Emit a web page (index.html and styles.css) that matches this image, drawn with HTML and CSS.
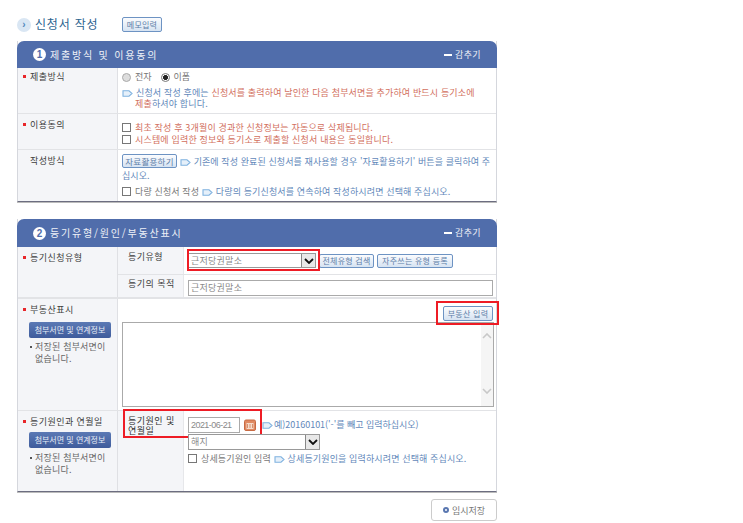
FILE: index.html
```html
<!DOCTYPE html>
<html lang="ko">
<head>
<meta charset="utf-8">
<title>신청서 작성</title>
<link rel="stylesheet" href="styles.css">
</head>
<body>
<svg class="sprite" width="0" height="0" aria-hidden="true">
  <symbol id="tag" viewBox="0 0 11 7"><path d="M1 .8h6l3 2.7-3 2.7H1z" fill="#e6f0fa" stroke="#7fb2e0" stroke-width="1.1"/></symbol>
</svg>
<main class="page">
  <header class="title-bar">
    <span class="title-icon">›</span>
    <h1>신청서 작성</h1>
    <button class="btn memo">메모입력</button>
  </header>

  <section class="panel">
    <div class="panel-head">
      <span class="num">1</span><h2>제출방식 및 이용동의</h2>
      <span class="fold"><i></i>감추기</span>
    </div>
    <div class="row r1">
      <div class="th req">제출방식</div>
      <div class="td">
        <div class="radios">
          <span class="radio off"></span><span class="gray">전자</span>
          <span class="radio on"></span><span class="gray">이폼</span>
        </div>
        <p class="note hang"><svg class="tag"><use href="#tag"/></svg>신청서 작성 후에는 <em>신청서를 출력하여 날인한 다음 첨부서면을 추가하여 반드시 등기소에 제출</em>하셔야 합니다.</p>
      </div>
    </div>
    <div class="row r2">
      <div class="th req">이용동의</div>
      <div class="td agree">
        <label class="red"><span class="check"></span>최초 작성 후 3개월이 경과한 신청정보는 자동으로 삭제됩니다.</label>
        <label class="red"><span class="check"></span>시스템에 입력한 정보와 등기소로 제출할 신청서 내용은 동일합니다.</label>
      </div>
    </div>
    <div class="row r3">
      <div class="th">작성방식</div>
      <div class="td">
        <p class="note use"><button class="btn reuse">자료활용하기</button> <svg class="tag"><use href="#tag"/></svg>기존에 작성 완료된 신청서를 재사용할 경우 '자료활용하기' 버튼을 클릭하여 주십시오.</p>
        <label class="note multi"><span class="check"></span><span class="gray">다량 신청서 작성</span> <svg class="tag"><use href="#tag"/></svg>다량의 등기신청서를 연속하여 작성하시려면 선택해 주십시오.</label>
      </div>
    </div>
  </section>

  <section class="panel second">
    <div class="panel-head">
      <span class="num">2</span><h2>등기유형/원인/부동산표시</h2>
      <span class="fold"><i></i>감추기</span>
    </div>
    <div class="row r5">
      <div class="th req">등기신청유형</div>
      <div class="stack">
        <div class="sub s1">
          <div class="th2">등기유형</div>
          <div class="td2">
            <span class="select wide"><span>근저당권말소</span><b><svg viewBox="0 0 10 6" width="10" height="6"><path d="M1 1l4 4 4-4" fill="none" stroke="#111" stroke-width="1.8"/></svg></b></span>
            <button class="btn b1">전체유형 검색</button>
            <button class="btn b2">자주쓰는 유형 등록</button>
            <span class="mark m1"></span>
          </div>
        </div>
        <div class="sub s2">
          <div class="th2">등기의 목적</div>
          <div class="td2"><span class="input full">근저당권말소</span></div>
        </div>
      </div>
    </div>
    <div class="row r6">
      <div class="th req">부동산표시
        <button class="attach">첨부서면 및 연계정보</button>
        <p class="saved">저장된 첨부서면이 없습니다.</p>
      </div>
      <div class="td prop">
        <div class="prop-top"><button class="btn b3">부동산 입력</button><span class="mark m2"></span></div>
        <div class="area">
          <div class="scroll">
            <svg viewBox="0 0 10 6" width="10" height="6"><path d="M1 5l4-4 4 4" fill="none" stroke="#c8c8c8" stroke-width="1.6"/></svg>
            <svg viewBox="0 0 10 6" width="10" height="6"><path d="M1 1l4 4 4-4" fill="none" stroke="#c8c8c8" stroke-width="1.6"/></svg>
          </div>
        </div>
      </div>
    </div>
    <div class="row r7">
      <div class="th req">등기원인과 연월일
        <button class="attach">첨부서면 및 연계정보</button>
        <p class="saved">저장된 첨부서면이 없습니다.</p>
      </div>
      <div class="th2 cause">등기원인 및<br>연월일<span class="mark m3"></span></div>
      <div class="td2 col">
        <div class="date-line">
          <span class="input date">2021-06-21</span>
          <svg class="cal" viewBox="0 0 12 12" width="12" height="12"><rect x=".5" y="1" width="11" height="10.5" rx="1.5" fill="#e08a62" stroke="#c86a42"/><rect x="2.5" y="4" width="7" height="6" fill="#f6dccb"/><path d="M3.5 5v4M6 5v4M8.5 5v4" stroke="#cf7d58" stroke-width=".8"/></svg>
          <svg class="tag t2"><use href="#tag"/></svg>
          <span class="note example">예)20160101('-'를 빼고 입력하십시오)</span>
        </div>
        <span class="select reason"><span>해지</span><b><svg viewBox="0 0 10 6" width="10" height="6"><path d="M1 1l4 4 4-4" fill="none" stroke="#111" stroke-width="1.8"/></svg></b></span>
        <label class="note detail"><span class="check"></span><span class="gray">상세등기원인 입력</span> <svg class="tag"><use href="#tag"/></svg>상세등기원인을 입력하시려면 선택해 주십시오.</label>
      </div>
    </div>
  </section>

  <div class="actions"><button class="save"><i></i>임시저장</button></div>
</main>
</body>
</html>
```
FILE: styles.css
```css
* { box-sizing: border-box; }
html, body { margin: 0; background: #fff; }
body { font: 9px/12px "Noto Sans CJK KR", "Noto Sans", sans-serif; color: #555; height: 523px; overflow: hidden; }
.sprite { position: absolute; }
.page { width: 480px; margin-left: 17px; }
p, h1, h2 { margin: 0; font-weight: 400; }
em { font-style: normal; color: #d2705e; }
button { font-family: inherit; margin: 0; cursor: pointer; }

.title-bar { height: 41px; display: flex; align-items: flex-start; padding-top: 17px; }
.title-icon { width: 14px; height: 14px; margin-top: 1px; border-radius: 50%; background: #d9e6f3; color: #4f86bd; font: 700 10px/13px "Liberation Sans", sans-serif; text-align: center; }
h1 { font-size: 12px; line-height: 14px; letter-spacing: .8px; color: #2d6490; margin-left: 4px; width: 87px; }
.btn { padding: 0; height: 14px; border: 1px solid #6d93c3; border-radius: 2px; background: linear-gradient(#fbfcfe, #d6e3f2); color: #5d7ea8; font-size: 8px; line-height: 12px; letter-spacing: .25px; white-space: nowrap; }
.memo { width: 40px; height: 15px; margin-top: 0; }

.panel { border-right: 1px solid #d5d7dd; border-bottom: 1px solid #6c6d80; border-left: 1px solid #d5d7dd; box-shadow: 0 1px 0 #bbb; }
.panel.second { margin-top: 17px; }
.panel-head { height: 27px; margin: 0 -1px; padding: 0 16px 0 16px; display: flex; align-items: center; background: #506dab; border-radius: 7px 7px 0 0; color: #eef1f7; }
.second .panel-head { height: 28px; }
.num { width: 13px; height: 13px; border-radius: 50%; background: #fff; color: #506dab; font: 700 10px/13px "Liberation Sans", sans-serif; text-align: center; }
h2 { font-size: 10px; letter-spacing: 1.8px; margin-left: 4px; }
.fold { margin-left: auto; display: flex; align-items: center; font-size: 9px; letter-spacing: .4px; }
.fold i { width: 8px; height: 2px; background: #fff; margin-right: 3px; }

.row { display: flex; border-bottom: 1px solid #e2e3e6; }
.row:last-child { border-bottom: 0; }
.r1 { height: 46px; }
.r2 { height: 36px; }
.r3 { height: 51px; border-bottom: 0; }
.r5 { height: 52px; border-bottom-width: 2px; }
.r6 { height: 112px; }
.r7 { height: 80px; }

.th { width: 100px; flex: none; padding: 5px 0 0 12px; background: #f4f5f8; border-right: 1px solid #dfe0e4; color: #3d3d3d; letter-spacing: .45px; position: relative; }
.r1 .th { padding-top: 3px; }
.req::before { content: ""; position: absolute; left: 5px; top: 9px; width: 3px; height: 3px; background: #e8262a; }
.r1 .req::before { top: 7px; }
.td { flex: 1; min-width: 0; padding: 3px 3px 0 4px; }
.gray { color: #777; }
.red { color: #d2705e; letter-spacing: .17px; }
.note { color: #6288ba; letter-spacing: .13px; }
.tag { width: 11px; height: 7px; margin-right: 3px; vertical-align: -0.5px; }
.hang { padding-left: 13px; text-indent: -13px; margin-top: 4px; line-height: 11px; letter-spacing: .15px; padding-right: 14px; }

.radios { display: flex; align-items: center; height: 12px; }
.radios .gray { margin-right: 9px; }
.radio { width: 9px; height: 9px; border-radius: 50%; border: 1px solid #777; margin-right: 4px; background: #fff; }
.radio.off { background: #ddd; border-color: #aaa; }
.radio.on { background: radial-gradient(circle, #222 0 2.2px, #fff 2.6px); }

.check { display: inline-block; width: 9px; height: 9px; border: 1px solid #777; background: #fff; margin-right: 4px; vertical-align: -1px; }
.agree { padding-top: 8px; }
.agree label { display: block; }
.use { line-height: 14px; letter-spacing: .09px; padding-top: 1px; }
.reuse { width: 55px; height: 14px; margin-right: 0; font-size: 8.5px; }
.multi { display: block; margin-top: 3px; }

.stack { flex: 1; min-width: 0; display: flex; flex-direction: column; }
.sub { display: flex; }
.s1 { height: 28px; border-bottom: 1px solid #e2e3e6; }
.s2 { flex: 1; }
.th2 { width: 66px; flex: none; padding: 4px 0 0 10px; background: #f4f5f8; border-right: 1px solid #e6e7ea; color: #3d3d3d; letter-spacing: .45px; }
.s2 .th2 { padding-top: 3px; }
.td2 { flex: 1; min-width: 0; padding: 5px 3px 0 4px; display: flex; align-items: flex-start; position: relative; }
.s1 .td2 { padding-top: 6px; }
.select { height: 15px; border: 1px solid #999; background: #fff; display: flex; justify-content: space-between; color: #8a8a8a; line-height: 13px; padding-left: 2px; letter-spacing: .25px; }
.select b { width: 14px; margin: 0; background: #e8e8e8; border-left: 1px solid #888; display: flex; align-items: center; justify-content: center; }
.wide { width: 128px; }
.b1 { width: 55px; margin-left: 3px; margin-top: 1px; }
.b2 { width: 76px; margin-left: 3px; margin-top: 1px; }
.input { display: block; height: 16px; border: 1px solid #aaa; color: #8a8a8a; padding-left: 2px; line-height: 14px; letter-spacing: .25px; }
.full { width: 305px; }

.mark { position: absolute; border: 2px solid #ee1c25; pointer-events: none; }
.m1 { left: 3px; top: 2px; width: 133px; height: 22px; }
.m2 { right: -6px; top: 2px; width: 63px; height: 24px; }
.m3 { left: 5px; top: -2px; width: 139px; height: 29px; }

.attach { display: block; width: 82px; height: 16px; margin: 6px 0 0 -1px; padding: 0; border: 0; border-radius: 2px; background: linear-gradient(#5b79b4, #3f5c9c); color: #e8edf6; font-size: 8px; line-height: 16px; white-space: nowrap; }
.r7 .attach { margin-top: 4px; }
.saved { position: relative; padding: 0 8px 0 5px; margin-top: 3px; color: #666; letter-spacing: .2px; }
.r7 .saved { margin-top: 4px; }
.saved::before { content: ""; position: absolute; left: 0; top: 5px; width: 2px; height: 2px; background: #555; }

.prop { padding-top: 0; position: relative; }
.prop-top { height: 23px; display: flex; justify-content: flex-end; align-items: flex-end; position: relative; padding-right: 0; }
.b3 { width: 50px; height: 15px; margin-bottom: 1px; }
.area { width: 372px; height: 85px; border: 1px solid #aaa; background: #fff; display: flex; justify-content: flex-end; }
.scroll { width: 12px; background: #f5f5f5; display: flex; flex-direction: column; justify-content: space-between; align-items: center; padding: 10px 0 12px; }

.cause { position: relative; line-height: 10px; padding: 5px 0 0 10px; color: #333; }
.col { flex-direction: column; padding-top: 6px; }
.date-line { display: flex; align-items: center; height: 16px; }
.date { width: 52px; font: 9px/14px "Liberation Sans", sans-serif; letter-spacing: -.55px; }
.cal { margin-left: 4px; }
.t2 { margin-left: 6px; margin-right: 1px; }
.example { letter-spacing: -.02px; }
.reason { width: 132px; height: 16px; margin-top: 1px; }
.reason b { width: 14px; }
.detail { display: block; margin-top: 3px; }

.actions { display: flex; justify-content: flex-end; margin-top: 7px; }
.save { width: 66px; height: 22px; padding: 0; border: 1px solid #ccc; border-radius: 3px; background: #fff; color: #777; font-size: 9px; display: flex; align-items: center; justify-content: center; }
.save i { width: 6px; height: 6px; border: 2px solid #5a77b0; border-radius: 50%; margin-right: 3px; }
```
